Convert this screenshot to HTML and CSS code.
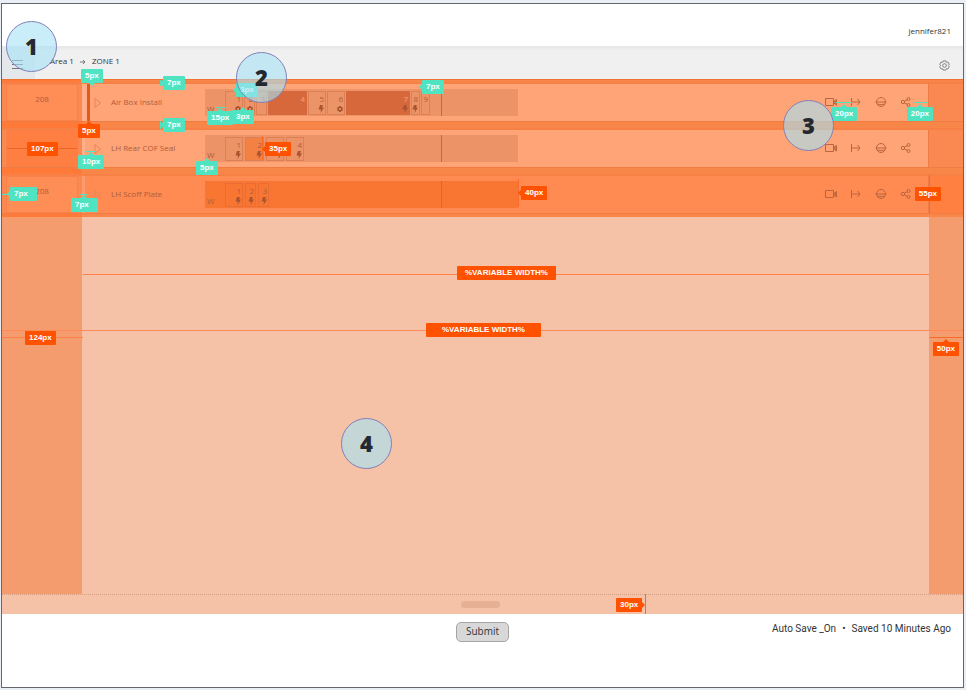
FILE: index.html
```html
<!DOCTYPE html>
<html lang="en">
<head>
<meta charset="utf-8">
<title>Zone 1</title>
<link rel="stylesheet" href="styles.css">
</head>
<body>
<svg class="defs" aria-hidden="true">
  <symbol id="video" viewBox="0 0 12 10"><path d="M.5 1.500h8v7h-8zM8.500 4h1.500v2.500h-1.500M10 3.500l1.500-1v5.500l-1.500-1z"/></symbol>
  <symbol id="move" viewBox="0 0 12 10"><path d="M1.500 1v8M2 5h8M7.500 2L10 5 7.500 8"/></symbol>
  <symbol id="ball" viewBox="0 0 12 10"><circle cx="6" cy="5" r="4.500"/><path d="M.5 5h11M2.500 7q3.500 1.500 7 0"/></symbol>
  <symbol id="share" viewBox="0 0 12 10"><circle cx="3" cy="5" r="1.700"/><circle cx="8.500" cy="2" r="1.500"/><circle cx="8.500" cy="8" r="1.500"/><path d="M4.500 4.200L7.200 2.700M4.500 5.800L7.200 7.300"/></symbol>
  <symbol id="play" viewBox="0 0 8 12"><path d="M1 1.500v9L6.500 6z"/></symbol>
  <symbol id="bolt" viewBox="0 0 6 8"><path d="M2 0h3L4 2.500h2L2.500 8 3 4.500H.5z"/></symbol>
  <symbol id="cog" viewBox="0 0 6 8"><path fill-rule="evenodd" d="M2.200 1h1.600l.3.900 1-.1.8 1.400-.6.800.6.800-.8 1.400-1-.1-.3.900H2.200l-.3-.9-1 .1-.8-1.400.6-.8-.6-.8.800-1.400 1 .1zM3 2.900a1.100 1.100 0 1 0 0 2.200 1.100 1.100 0 0 0 0-2.200z"/></symbol>
</svg>
<div class="frame">
  <header class="top"><span>jennifer821</span></header>
  <nav class="bar" aria-label="Breadcrumb">
    <button class="menu" aria-label="Menu"><svg viewBox="0 0 12 10"><path d="M0 1.500h11M0 5.500h11M0 9.500h11"/></svg></button>
    <a href="#area">Area 1</a>
    <svg class="arrow" viewBox="0 0 6 6"><path d="M0 3h5M3 1l2 2-2 2"/></svg>
    <a href="#zone">ZONE 1</a>
    <button class="gear" aria-label="Settings"><svg viewBox="0 0 12 12"><path d="M4.500 1h3l.6 1.500 1.700-.2 1.400 2.400L10.200 6l1 1.300-1.400 2.400-1.700-.2L7.500 11h-3l-.6-1.500-1.700.2L.8 7.300 1.800 6 .8 4.700l1.400-2.400 1.700.2z"/><circle cx="6" cy="6" r="2"/></svg></button>
  </nav>
  <main class="board">
    <section class="rows">
      <div class="row active">
        <div class="station">208</div>
        <div class="task">
          <button class="play" aria-label="Play"><svg viewBox="0 0 8 12"><use href="#play"/></svg></button>
          <span class="name">Air Box Install</span>
          <div class="track"><b class="walk">W</b>
            <div class="steps">
              <div class="step" style="width:18px">1<svg><use href="#cog"/></svg></div>
              <div class="step" style="width:11px">2<svg><use href="#cog"/></svg></div>
              <div class="step" style="width:11px">3</div>
              <div class="step dark" style="width:39px">4</div>
              <div class="step" style="width:18px">5<svg><use href="#bolt"/></svg></div>
              <div class="step" style="width:18px">6<svg><use href="#cog"/></svg></div>
              <div class="step dark" style="width:64px">7<svg><use href="#bolt"/></svg></div>
              <div class="step" style="width:9px">8<svg><use href="#bolt"/></svg></div>
              <div class="step" style="width:9px">9</div>
            </div>
          </div>
          <div class="actions">
            <button aria-label="Video"><svg><use href="#video"/></svg></button>
            <button aria-label="Move"><svg><use href="#move"/></svg></button>
            <button aria-label="Parts"><svg><use href="#ball"/></svg></button>
            <button aria-label="Share"><svg><use href="#share"/></svg></button>
          </div>
        </div>
        <div class="end"></div>
      </div>
      <div class="row">
        <div class="station"></div>
        <div class="task">
          <button class="play" aria-label="Play"><svg viewBox="0 0 8 12"><use href="#play"/></svg></button>
          <span class="name">LH Rear COF Seal</span>
          <div class="track"><b class="walk">W</b>
            <div class="steps">
              <div class="step" style="width:18px">1<svg><use href="#bolt"/></svg></div>
              <div class="step picked" style="width:19px">2<svg><use href="#bolt"/></svg></div>
              <div class="step only-icon" style="width:18px"><svg><use href="#bolt"/></svg></div>
              <div class="step" style="width:18px">4<svg><use href="#bolt"/></svg></div>
            </div>
          </div>
          <div class="actions">
            <button aria-label="Video"><svg><use href="#video"/></svg></button>
            <button aria-label="Move"><svg><use href="#move"/></svg></button>
            <button aria-label="Parts"><svg><use href="#ball"/></svg></button>
            <button aria-label="Share"><svg><use href="#share"/></svg></button>
          </div>
        </div>
        <div class="end"></div>
      </div>
      <div class="row marked">
        <div class="station">208</div>
        <div class="task">
          <button class="play" aria-label="Play"><svg viewBox="0 0 8 12"><use href="#play"/></svg></button>
          <span class="name">LH Scoff Plate</span>
          <div class="track"><b class="walk">W</b>
            <div class="steps">
              <div class="step" style="width:18px">1<svg><use href="#bolt"/></svg></div>
              <div class="step" style="width:11px">2<svg><use href="#bolt"/></svg></div>
              <div class="step" style="width:11px">3<svg><use href="#bolt"/></svg></div>
            </div>
          </div>
          <div class="actions">
            <button aria-label="Video"><svg><use href="#video"/></svg></button>
            <button aria-label="Move"><svg><use href="#move"/></svg></button>
            <button aria-label="Parts"><svg><use href="#ball"/></svg></button>
            <button aria-label="Share"><svg><use href="#share"/></svg></button>
          </div>
        </div>
        <div class="end"></div>
      </div>
    </section>
    <section class="space"></section>
  </main>
  <div class="drawer"><span class="handle"></span></div>
  <footer class="foot">
    <button class="submit">Submit</button>
    <p class="saved"><span>Auto Save _On</span><span>•</span><span>Saved 10 Minutes Ago</span></p>
  </footer>

  <div class="notes">
    <i class="rule r-task"></i><i class="rule r-full"></i><i class="rule r-left"></i><i class="rule r-right"></i><i class="rule r-station"></i>
    <i class="vrule v-strip"></i><i class="vrule v-track"></i><i class="vrule v-step"></i><i class="vrule v-row"></i>
    <i class="rule teal t-a"></i><i class="rule teal t-b"></i><i class="rule teal t-c"></i><i class="rule teal t-d"></i><i class="rule teal t-e"></i><i class="rule teal t-f"></i><i class="rule teal t-g"></i>
    <i class="vrule teal u-a"></i><i class="vrule teal u-b"></i><i class="vrule teal u-c"></i>
    <span class="tag teal down n1">5px</span>
    <span class="tag teal left n2">7px</span>
    <span class="tag teal left n3">7px</span>
    <span class="tag teal left n4">3px</span>
    <span class="tag teal up n5">15px</span>
    <span class="tag teal up n6">3px</span>
    <span class="tag teal left n7">7px</span>
    <span class="tag teal up n8">10px</span>
    <span class="tag teal up n9">5px</span>
    <span class="tag teal left wide n10">7px</span>
    <span class="tag teal up wide n11">7px</span>
    <span class="tag teal up n12">20px</span>
    <span class="tag teal up n13">20px</span>
    <span class="tag up n14">5px</span>
    <span class="tag n15">107px</span>
    <span class="tag left n16">35px</span>
    <span class="tag left n17">40px</span>
    <span class="tag n18">55px</span>
    <span class="tag n19">124px</span>
    <span class="tag up n20">50px</span>
    <span class="tag right n21">30px</span>
    <span class="tag n22">%VARIABLE WIDTH%</span>
    <span class="tag n23">%VARIABLE WIDTH%</span>
    <span class="dot d1">1</span><span class="dot d2">2</span><span class="dot d3">3</span><span class="dot d4">4</span>
  </div>
</div>
</body>
</html>
```

FILE: styles.css
```css
* { box-sizing: border-box; }
body {
  margin: 0;
  padding: 3px 2px 2px 1px;
  min-height: 100vh;
  display: flex;
  background: #e9eff5;
  color: #333;
  font: 8px/12px "Open Sans", "Noto Sans", sans-serif;
}
button { margin: 0; padding: 0; border: 0; background: none; font: inherit; color: inherit; display: flex; }
a { color: inherit; text-decoration: none; }
svg { fill: none; stroke: currentColor; }
.defs { position: absolute; width: 0; height: 0; }
.frame {
  position: relative;
  flex: 1;
  display: flex;
  flex-direction: column;
  border: 1px solid #63676d;
  background: #fff;
}

.top { height: 42px; padding: 21px 12px 0 0; text-align: right; }
.bar {
  height: 33px;
  display: flex;
  align-items: center;
  background: linear-gradient(#e6e6e6, #f0f0f0 5px);
}
.bar a { padding-bottom: 4px; }
.menu { width: 33px; height: 33px; margin-right: 15px; padding: 13px 0 0 10px; background: #e5e8ea; color: #777; }
.menu svg { width: 12px; height: 10px; }
.arrow { width: 6px; height: 6px; margin: 0 6px 2px; color: #777; }
.gear { margin-left: auto; padding: 0 13px 4px 0; color: #777; align-self: flex-end; }
.gear svg { width: 11px; height: 11px; margin-bottom: 4px; }

.board { flex: 1; display: flex; flex-direction: column; }
.rows {
  display: flex;
  flex-direction: column;
  gap: 9px;
  padding: 4px 0;
  background: linear-gradient(90deg, #ff7a38 80px, #f98649 80px);
  border-top: 1px solid #f17231;
  color: #ad5e3a;
}
.row {
  display: grid;
  grid-template-columns: 80px 1fr 34px;
  height: 37px;
  box-shadow: 0 1px #f07b43, 0 -2px #f68045;
  background: #f98950;
}
.station { margin: 0 4px; padding-top: 8px; text-align: center; background: #ff8d56; border: 1px solid #f98148; }
.task {
  display: grid;
  grid-template-columns: 26px 94px 313px 1fr;
  align-items: center;
  background: #ffa477;
  border-right: 1px solid #ed7c48;
  border-left: 3px solid #ffb08a;
}
.active .task { grid-template-columns: 24px 94px 313px 1fr; border-left-width: 5px; box-shadow: inset 3px 0 #e25a1e; }
.play { padding-left: 9px; color: #e88558; }
.active .play { padding-left: 7px; }
.play svg { width: 8px; height: 12px; }
.name { padding-bottom: 2px; }
.track {
  position: relative;
  height: 27px;
  display: flex;
  align-items: center;
  background: #ec9468;
}
.track::after { content: ""; position: absolute; left: 236px; top: 0; bottom: 0; width: 1px; background: #ea5a30; }
.walk { width: 20px; padding: 12px 0 0 2px; font-weight: 400; }
.steps { display: flex; gap: 2px; height: 24px; }
.step {
  display: flex;
  flex-direction: column;
  align-items: flex-end;
  justify-content: space-between;
  padding: 0 1px 1px 0;
  border: 1px solid #de8056;
  line-height: 13px;
}
.active .steps { gap: 1px; }
.step svg { width: 6px; height: 8px; fill: #a9532f; stroke: none; }
.only-icon { justify-content: flex-end; }
.dark { background: #d6683c; border-color: #d6683c; color: #f3a47f; }
.picked { background: #f28143; }
.row:not(.active):not(.marked) .station { background: #ff7f42; }
.marked .task { background: #ff8b53; border-left-color: #ff9a6c; }
.marked .track { background: #f97632; }
.marked .track::after { background: #ee5f25; }
.marked .step { border-color: #e86e36; }
.marked .end { background: #ff8040; }
.actions { display: flex; justify-content: flex-end; gap: 13px; padding: 0 16px 2px 0; color: #ba663e; }
.actions svg { width: 12px; height: 10px; }

.space { flex: 1; background: linear-gradient(90deg, #f59c6f 80px, #f5c2a7 80px calc(100% - 34px), #f59c6f calc(100% - 34px)); }
.drawer { height: 20px; display: flex; justify-content: center; align-items: center; background: #f5c2a7; border-top: 1px dotted #d2a085; }
.handle { width: 39px; height: 7px; margin-right: 4px; border-radius: 4px; background: #e5b093; }
.foot {
  height: 73px;
  display: grid;
  grid-template-columns: 1fr auto 1fr;
  align-items: start;
  padding: 8px 12px 0;
  font-size: 10px;
}
.submit {
  grid-column: 2;
  width: 53px;
  height: 20px;
  padding-bottom: 2px;
  align-items: center;
  justify-content: center;
  border: 1px solid #a5a5a5;
  border-radius: 5px;
  background: #d8d8d8;
}
.saved { margin: 0; display: flex; justify-content: flex-end; gap: 6px; font-family: Roboto, "Open Sans", sans-serif; line-height: 14px; }

.notes { position: absolute; inset: -1px; }
.notes > * { position: absolute; }
.rule { height: 1px; background: #ff8149; border: solid #ff8149; border-width: 0 1px; }
.vrule { width: 1px; background: #f8692a; }
.rule.teal, .vrule.teal { background: #50e3c2; border-color: #50e3c2; }
.r-task { left: 82px; right: 35px; top: 271px; }
.r-full { left: 1px; right: 1px; top: 327px; background: #ff8a57; }
.r-left { left: 1px; width: 81px; top: 334px; }
.r-right { right: 1px; width: 34px; top: 334px; background: #f66a28; }
.r-station { left: 5px; width: 72px; top: 145px; background: #ee6428; }
.v-strip { left: 644px; top: 591px; height: 20px; }
.v-track { left: 517px; top: 176px; height: 28px; }
.v-step { left: 261px; top: 133px; height: 24px; }
.v-row { right: 34px; top: 172px; height: 38px; }
.t-a { left: 835px; width: 16px; top: 99px; }
.t-b { right: 37px; width: 14px; top: 99px; }
.t-c { left: 214px; width: 11px; top: 104px; }
.t-d { left: 232px; width: 12px; top: 87px; }
.t-e { left: 85px; width: 10px; top: 148px; }
.t-f { left: 78px; width: 9px; top: 191px; }
.t-g { left: 1px; width: 12px; top: 191px; }
.u-a { left: 159px; top: 77px; height: 6px; }
.u-b { left: 159px; top: 118px; height: 8px; }
.u-c { left: 418px; top: 80px; height: 6px; }
.tag {
  --tone: #ff5200;
  height: 14px;
  margin-left: -1px;
  padding: 0 4px;
  border-radius: 1px;
  background: var(--tone);
  color: #fff;
  font: bold 8px/14px "Liberation Sans", sans-serif;
  white-space: nowrap;
}
.tag.teal { --tone: #50e3c2; }
.tag.wide { padding-right: 9px; }
.tag::before { position: absolute; border: 3px solid transparent; }
.left::before { content: ""; right: 100%; top: 4px; border-right-color: var(--tone); }
.right::before { content: ""; left: 100%; top: 4px; border-left-color: var(--tone); }
.up::before { content: ""; bottom: 100%; left: calc(50% - 3px); border-bottom-color: var(--tone); }
.down::before { content: ""; top: 100%; left: calc(50% - 3px); border-top-color: var(--tone); }
.n1 { left: 81px; top: 66px; }
.n2 { left: 163px; top: 73px; }
.n3 { left: 163px; top: 115px; }
.n4 { left: 236px; top: 80px; }
.n5 { left: 207px; top: 108px; }
.n6 { left: 232px; top: 107px; }
.n7 { left: 422px; top: 77px; }
.n8 { left: 78px; top: 152px; }
.n9 { left: 196px; top: 158px; }
.n10 { left: 10px; top: 184px; }
.n11 { left: 71px; top: 195px; }
.n12 { left: 831px; top: 104px; }
.n13 { right: 31px; top: 104px; }
.n14 { left: 78px; top: 121px; }
.n15 { left: 27px; top: 139px; }
.n16 { left: 265px; top: 139px; }
.n17 { left: 521px; top: 183px; }
.n18 { right: 23px; top: 184px; }
.n19 { left: 25px; top: 328px; }
.n20 { right: 5px; top: 339px; }
.n21 { left: 616px; top: 595px; }
.n22 { left: 457px; top: 263px; padding: 0 8px; }
.n23 { left: 426px; top: 320px; padding: 0 16px; }
.dot {
  width: 51px;
  height: 51px;
  border: 1px solid #8180b9;
  border-radius: 50%;
  background: rgba(165, 227, 247, .6);
  color: #25292f;
  font: 800 22px/49px "Open Sans", sans-serif;
  text-align: center;
}
.d1 { left: 5px; top: 18px; }
.d2 { left: 235px; top: 49px; }
.d3 { left: 782px; top: 97px; }
.d4 { left: 340px; top: 415px; }
```
